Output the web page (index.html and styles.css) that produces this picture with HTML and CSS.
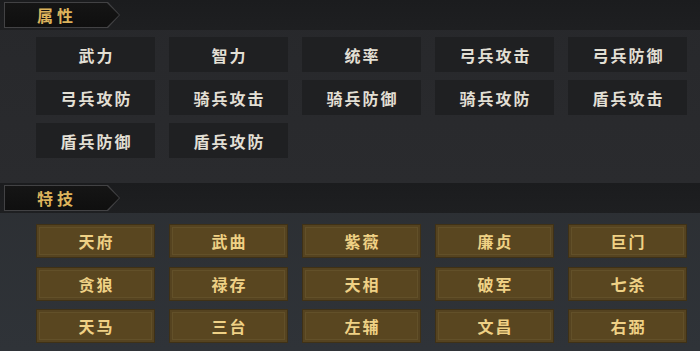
FILE: index.html
```html
<!DOCTYPE html>
<html lang="zh">
<head>
<meta charset="utf-8">
<link rel="stylesheet" href="styles.css">
</head>
<body>
<div class="page">
  <section class="sec attr">
    <div class="bar"><div class="tab"><div class="tab-inner">属性</div></div></div>
    <div class="grid">
      <div class="cell">武力</div>
      <div class="cell">智力</div>
      <div class="cell">统率</div>
      <div class="cell">弓兵攻击</div>
      <div class="cell">弓兵防御</div>
      <div class="cell">弓兵攻防</div>
      <div class="cell">骑兵攻击</div>
      <div class="cell">骑兵防御</div>
      <div class="cell">骑兵攻防</div>
      <div class="cell">盾兵攻击</div>
      <div class="cell">盾兵防御</div>
      <div class="cell">盾兵攻防</div>
    </div>
  </section>
  <section class="sec skill">
    <div class="bar"><div class="tab"><div class="tab-inner">特技</div></div></div>
    <div class="grid">
      <div class="cell">天府</div>
      <div class="cell">武曲</div>
      <div class="cell">紫薇</div>
      <div class="cell">廉贞</div>
      <div class="cell">巨门</div>
      <div class="cell">贪狼</div>
      <div class="cell">禄存</div>
      <div class="cell">天相</div>
      <div class="cell">破军</div>
      <div class="cell">七杀</div>
      <div class="cell">天马</div>
      <div class="cell">三台</div>
      <div class="cell">左辅</div>
      <div class="cell">文昌</div>
      <div class="cell">右弼</div>
    </div>
  </section>
</div>
</body>
</html>
```
FILE: styles.css
```css
html, body {
  margin: 0;
  padding: 0;
}
body {
  width: 700px;
  height: 351px;
  overflow: hidden;
  background: #2a2b2e;
  font-family: "Noto Sans CJK SC", "Noto Sans CJK TC", sans-serif;
}
.page {
  display: flex;
  flex-direction: column;
}
.sec.attr {
  background: linear-gradient(180deg, #27282b 0%, #2a2b2e 100%);
  height: 183px;
}
.sec.skill {
  background: linear-gradient(180deg, #2c2f33 0%, #2f3338 100%);
  height: 168px;
}
.bar {
  height: 30px;
  background: linear-gradient(180deg, #1b1c1e 0%, #1e1f21 100%);
  display: flex;
  align-items: center;
  padding-left: 4px;
  box-sizing: border-box;
}
.tab {
  width: 116px;
  height: 26px;
  padding: 1px;
  box-sizing: border-box;
  background: #424244;
  clip-path: polygon(0 0, 104px 0, 116px 13px, 104px 26px, 0 26px);
}
.tab-inner {
  width: 114px;
  height: 24px;
  background: linear-gradient(180deg, #151515 0%, #0f0f0f 100%);
  clip-path: polygon(0 0, 102px 0, 114px 12px, 102px 24px, 0 24px);
  color: #dcb35c;
  font-weight: 700;
  font-size: 16px;
  letter-spacing: 4px;
  line-height: 24px;
  padding-left: 32px;
  box-sizing: border-box;
}
.grid {
  display: grid;
  grid-template-columns: repeat(5, 119px);
  column-gap: 14px;
  padding-left: 36px;
}
.attr .grid {
  padding-top: 7px;
  grid-auto-rows: 35px;
  row-gap: 8px;
}
.skill .grid {
  padding-top: 11px;
  grid-auto-rows: 34px;
  row-gap: 8.5px;
}
.cell {
  display: flex;
  align-items: center;
  justify-content: center;
  font-size: 16px;
  font-weight: 700;
  letter-spacing: 2px;
  padding-left: 2px;
  box-sizing: border-box;
}
.attr .cell {
  background: #1f2022;
  color: #e2dfd4;
}
.skill .cell {
  background: #594620;
  border: 1px solid #3f3116;
  box-shadow: inset 0 0 0 2px #554320, inset 0 0 0 3px #625029;
  color: #efd185;
}
```
